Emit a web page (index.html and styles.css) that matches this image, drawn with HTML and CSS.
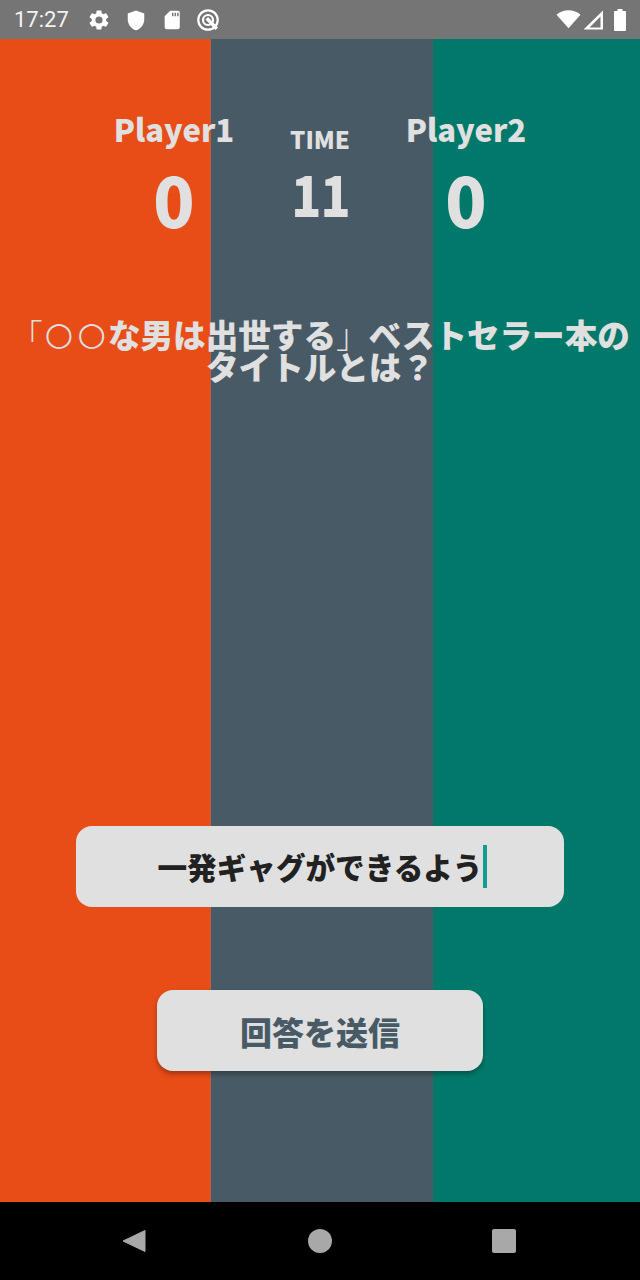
FILE: index.html
```html
<!DOCTYPE html>
<html lang="ja">
<head>
<meta charset="utf-8">
<title>Quiz</title>
<link rel="stylesheet" href="styles.css">
</head>
<body>
<div class="phone">
  <header class="status">
    <span class="clock">17:27</span>
    <svg class="icon gear" viewBox="0 0 24 24"><path d="M19.14 12.94c.04-.3.06-.61.06-.94s-.02-.64-.07-.94l2.03-1.58a.49.49 0 0 0 .12-.61l-1.92-3.32a.49.49 0 0 0-.59-.22l-2.39.96a7 7 0 0 0-1.62-.94l-.36-2.54a.48.48 0 0 0-.48-.41h-3.84a.48.48 0 0 0-.47.41l-.36 2.54a7.3 7.3 0 0 0-1.62.94l-2.39-.96a.49.49 0 0 0-.59.22L2.71 8.87a.48.48 0 0 0 .12.61l2.03 1.58c-.05.3-.09.63-.09.94s.02.64.07.94l-2.03 1.58a.49.49 0 0 0-.12.61l1.92 3.32c.12.22.37.29.59.22l2.39-.96c.5.38 1.03.7 1.62.94l.36 2.54c.05.24.24.41.48.41h3.84c.24 0 .44-.17.47-.41l.36-2.54a7 7 0 0 0 1.62-.94l2.39.96c.22.08.47 0 .59-.22l1.92-3.32a.48.48 0 0 0-.12-.61zM12 15.6a3.6 3.6 0 1 1 0-7.2 3.6 3.6 0 0 1 0 7.2z"/></svg>
    <svg class="icon shield" viewBox="0 0 24 24"><path d="M12 1.500 3 5v6.500c0 5.400 3.800 10.400 9 11.700 5.200-1.300 9-6.300 9-11.700V5z"/></svg>
    <svg class="icon sd" viewBox="0 0 24 24"><path fill-rule="evenodd" d="M18.500 2H10L4 8v12c0 1.100.9 2 2 2h12.500c1.100 0 2-.9 2-2V4c0-1.100-.9-2-2-2zM12 4h1.600v4H12zm2.800 0h1.600v4h-1.600zm2.800 0h1.600v4h-1.600z"/></svg>
    <svg class="icon qlogo" viewBox="0 0 24 24"><circle cx="12" cy="12" r="9.700" fill="none" stroke="#fff" stroke-width="2.200"/><circle cx="12" cy="12" r="5" fill="none" stroke="#fff" stroke-width="2.200"/><path d="M9.500 11.500 12 9l10 10.500-2.500 2.500z"/></svg>
    <span class="status-gap"></span>
    <svg class="icon wifi" viewBox="0 0 24 20"><path d="M12 18.500 0.500 5.500C3.500 2.800 7.500 1.200 12 1.200s8.500 1.600 11.500 4.300z"/></svg>
    <svg class="icon signal" viewBox="0 0 22 22"><path fill-rule="evenodd" d="M21 1.500V20.500H1.500zM18.500 7.500 7.500 18.500H18.500z"/></svg>
    <svg class="icon battery" viewBox="0 0 14 24"><path d="M4.500 1h5v2h2.500c.6 0 1 .4 1 1v18c0 .6-.4 1-1 1H2c-.6 0-1-.4-1-1V4c0-.6.4-1 1-1h2.500z"/></svg>
  </header>

  <main class="game">
    <div class="stripes">
      <div class="stripe orange"></div>
      <div class="stripe slate"></div>
      <div class="stripe teal"></div>
    </div>
    <div class="content">
      <section class="scoreboard">
        <div class="player">
          <div class="player-name">Player1</div>
          <div class="score">0</div>
        </div>
        <div class="timer">
          <div class="timer-label">TIME</div>
          <div class="timer-value">11</div>
        </div>
        <div class="player">
          <div class="player-name">Player2</div>
          <div class="score">0</div>
        </div>
      </section>
      <h1 class="question"><span class="thin">「</span><span class="ring">○</span><span class="ring">○</span>な男は出世する<span class="thin">」</span>ベストセラー本の<br>タイトルとは？</h1>
      <div class="answer"><span class="answer-text">一発ギャグができるよう</span><span class="caret"></span></div>
      <button class="submit" type="button">回答を送信</button>
    </div>
  </main>

  <nav class="navbar">
    <svg class="nav-icon" viewBox="0 0 24 24"><path d="M23 1.500V22.500L1 12z" stroke="#a8a8a8" stroke-width="1" stroke-linejoin="round"/></svg>
    <svg class="nav-icon nav-home" viewBox="0 0 24 24"><circle cx="12" cy="12" r="12"/></svg>
    <svg class="nav-icon" viewBox="0 0 24 24"><rect width="24" height="24" rx="2"/></svg>
  </nav>
</div>
</body>
</html>
```

FILE: styles.css
```css
* { box-sizing: border-box; margin: 0; padding: 0; }
html, body { width: 640px; height: 1280px; overflow: hidden; background: #000; }
body { font-family: "Noto Sans CJK JP", "Noto Sans", sans-serif; }

.phone { width: 640px; height: 1280px; display: flex; flex-direction: column; }

.status {
  height: 39px;
  flex: none;
  background: #757575;
  display: flex;
  align-items: center;
  padding: 0 13px 0 14px;
}
.clock {
  font-family: Roboto, sans-serif;
  font-size: 22px;
  color: #f2f2f2;
  width: 73px;
}
.icon { fill: #fff; display: block; flex: none; }
.gear { width: 24px; height: 24px; }
.shield { width: 22px; height: 22px; margin-left: 14px; }
.sd { width: 22px; height: 22px; margin-left: 14px; }
.qlogo { width: 24px; height: 24px; margin-left: 13px; }
.status-gap { flex: 1; }
.wifi { width: 25px; height: 21px; }
.signal { width: 22px; height: 22px; margin-left: 1px; }
.battery { width: 14px; height: 24px; margin-left: 9px; }

.game { position: relative; flex: none; height: 1163px; }
.stripes { display: flex; height: 100%; }
.stripe { height: 100%; }
.orange { width: 211px; background: #e84c17; border-right: 1px solid #b8603f; }
.slate { width: 222px; background: #475a65; }
.teal { flex: 1; background: #00796b; }

.content {
  position: absolute;
  inset: 0;
  display: flex;
  flex-direction: column;
  align-items: center;
  color: #e0e0e0;
}

.scoreboard {
  display: flex;
  justify-content: center;
  align-items: flex-start;
  padding-top: 67px;
  height: 279px;
}
.player, .timer { width: 146px; display: flex; flex-direction: column; align-items: center; }
.player-name { font-size: 31px; font-weight: 900; line-height: 46px; white-space: nowrap; }
.score { font-size: 68px; font-weight: 900; line-height: 76px; margin-top: 9px; }
.timer { padding-top: 15px; }
.timer-label { font-size: 24px; font-weight: 900; line-height: 36px; }
.timer-value { font-size: 55px; font-weight: 900; line-height: 66px; letter-spacing: -1px; margin-top: 3px; transform: scaleX(0.9); }

.question {
  width: 640px;
  font-size: 32.600px;
  font-weight: 900;
  line-height: 32px;
  text-align: center;
  white-space: nowrap;
}
.thin { font-weight: 300; }
.ring {
  display: inline-block;
  width: 1em;
  text-align: center;
  font-family: "DejaVu Sans", sans-serif;
  font-weight: 400;
  line-height: 16px;
  vertical-align: 3px;
}

.answer {
  margin-top: 444px;
  width: 488px;
  height: 81px;
  flex: none;
  border-radius: 16px;
  background: #e0e0e0;
  display: flex;
  align-items: center;
  justify-content: center;
  padding-left: 5px;
  color: #212121;
}
.answer-text { font-size: 29.600px; font-weight: 900; white-space: nowrap; }
.caret { width: 4px; height: 43px; background: #129c8d; margin-left: 1px; }

.submit {
  margin-top: 83px;
  width: 326px;
  height: 81px;
  flex: none;
  border: 0;
  border-radius: 16px;
  background: #e0e0e0;
  color: #475a65;
  font-family: inherit;
  font-size: 32px;
  font-weight: 900;
  box-shadow: 0 3px 5px rgba(0, 0, 0, 0.3);
}

.navbar {
  flex: 1;
  background: #000;
  display: flex;
  align-items: center;
  justify-content: space-between;
  padding: 0 124px 0 122px;
}
.nav-icon { width: 24px; height: 24px; fill: #a8a8a8; display: block; }
.nav-home { margin-left: 2px; }
```
